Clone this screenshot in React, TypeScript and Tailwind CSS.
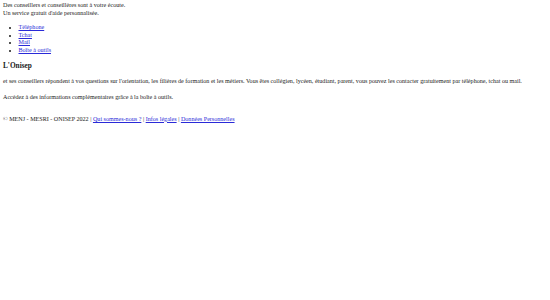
export default function App() {
  const links = ["Téléphone", "Tchat", "Mail", "Boîte à outils"];
  return (
    <div className="min-h-[300px] bg-white px-[3px] pt-[2.2px] font-['Liberation_Serif',serif] text-[6.1px] leading-[7.8px] text-[#1a1a1a]">
      <div>
        Des conseillers et conseillères sont à votre écoute.
        <br />
        Un service gratuit d'aide personnalisée.
      </div>

      <ul className="mt-[6.1px] list-disc pl-[15.5px]">
        {links.map((l) => (
          <li key={l}>
            <a href="#" className="text-[#2a2ad8] underline">
              {l}
            </a>
          </li>
        ))}
      </ul>

      <h3 className="mt-[6.8px] text-[7.3px] font-bold leading-[8.5px]">L'Onisep</h3>

      <p className="mt-[7.3px]">
        et ses conseillers répondent à vos questions sur l'orientation, les filières de formation et les métiers. Vous êtes collégien, lycéen, étudiant, parent, vous pouvez les contacter gratuitement par téléphone, tchat ou mail.
      </p>
      <p className="mt-[8.2px]">Accédez à des informations complémentaires grâce à la boîte à outils.</p>

      <div className="mt-[14.2px]">
        © MENJ - MESRI - ONISEP 2022 |{" "}
        <a href="#" className="text-[#2a2ad8] underline">Qui sommes-nous ?</a> |{" "}
        <a href="#" className="text-[#2a2ad8] underline">Infos légales</a> |{" "}
        <a href="#" className="text-[#2a2ad8] underline">Données Personnelles</a>
      </div>
    </div>
  );
}
